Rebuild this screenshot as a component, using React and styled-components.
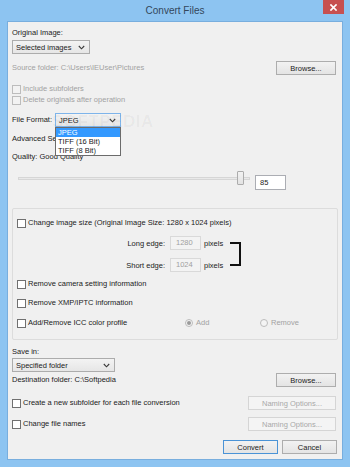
import React from 'react';
import styled, { createGlobalStyle } from 'styled-components';

const GlobalStyle = createGlobalStyle`
  html, body {
    margin: 0;
    padding: 0;
    background: #8dc4f1;
  }
  body {
    font-family: "Liberation Sans", Arial, sans-serif;
    font-size: 7.5px;
    color: #1b1b1b;
  }
  * {
    box-sizing: border-box;
  }
`;

const Chevron = () => (
  <svg width="7" height="5" viewBox="0 0 7 5">
    <polyline points="0.8,1 3.5,3.8 6.2,1" fill="none" stroke="#3a3a3a" strokeWidth="1.1" />
  </svg>
);

const CloseIcon = () => (
  <svg width="7" height="7" viewBox="0 0 7 7">
    <path d="M1 1 L6 6 M6 1 L1 6" stroke="#fff" strokeWidth="1.7" strokeLinecap="square" />
  </svg>
);

const App = () => {
  return (
    <>
      <GlobalStyle />
      <Window>
        <TitleBar>
          <span />
          <Title>Convert Files</Title>
          <CloseButton>
            <CloseIcon />
          </CloseButton>
        </TitleBar>

        <Client>
          <Watermark>SOFTPEDIA</Watermark>

          <Label $mt={6}>Original Image:</Label>
          <Select $w={78} $mt={2}>
            <span>Selected images</span>
            <Chevron />
          </Select>

          <SplitRow $mt={7}>
            <Label $disabled>{'Source folder: C:\\Users\\IEUser\\Pictures'}</Label>
            <Button $w={60}>Browse...</Button>
          </SplitRow>

          <CheckRow $mt={9}>
            <Box $disabled />
            <Label $disabled>Include subfolders</Label>
          </CheckRow>
          <CheckRow $mt={1}>
            <Box $disabled />
            <Label $disabled>Delete originals after operation</Label>
          </CheckRow>

          <FormatRow $mt={8}>
            <Label $w={43}>File Format:</Label>
            <FormatWrap>
              <Select $w={66} $focused>
                <span>JPEG</span>
                <Chevron />
              </Select>
              <Popup>
                <PopupItem $active>JPEG</PopupItem>
                <PopupItem>TIFF (16 Bit)</PopupItem>
                <PopupItem>TIFF (8 Bit)</PopupItem>
              </Popup>
            </FormatWrap>
          </FormatRow>

          <Label $mt={7}>Advanced Settings</Label>
          <Label $mt={8}>Quality: Good Quality</Label>

          <SliderRow $mt={9}>
            <Slider>
              <Track />
              <Thumb $left={219} />
            </Slider>
            <TextBox>85</TextBox>
          </SliderRow>

          <Group $mt={18}>
            <CheckRow $mt={9}>
              <Box />
              <Label>Change image size (Original Image Size: 1280 x 1024 pixels)</Label>
            </CheckRow>

            <EdgeBlock>
              <EdgeRows>
                <EdgeRow>
                  <EdgeLabel>Long edge:</EdgeLabel>
                  <EdgeInput>1280</EdgeInput>
                  <Unit>pixels</Unit>
                </EdgeRow>
                <EdgeRow $mt={8}>
                  <EdgeLabel>Short edge:</EdgeLabel>
                  <EdgeInput>1024</EdgeInput>
                  <Unit>pixels</Unit>
                </EdgeRow>
              </EdgeRows>
              <Bracket />
            </EdgeBlock>

            <CheckRow $mt={7}>
              <Box />
              <Label>Remove camera setting information</Label>
            </CheckRow>
            <CheckRow $mt={9}>
              <Box />
              <Label>Remove XMP/IPTC information</Label>
            </CheckRow>
            <CheckRow $mt={10}>
              <Box />
              <Label $w={157}>Add/Remove ICC color profile</Label>
              <RadioOption $w={75}>
                <Radio $checked />
                <Label $disabled>Add</Label>
              </RadioOption>
              <RadioOption>
                <Radio />
                <Label $disabled>Remove</Label>
              </RadioOption>
            </CheckRow>
          </Group>

          <Label $mt={7}>Save in:</Label>
          <Select $w={103} $mt={1}>
            <span>Specified folder</span>
            <Chevron />
          </Select>

          <SplitRow $mt={1}>
            <Label>{'Destination folder: C:\\Softpedia'}</Label>
            <Button $w={60}>Browse...</Button>
          </SplitRow>

          <SplitRow $mt={9}>
            <CheckRow>
              <Box />
              <Label>Create a new subfolder for each file conversion</Label>
            </CheckRow>
            <Button $w={88} $disabled>Naming Options...</Button>
          </SplitRow>

          <SplitRow $mt={7}>
            <CheckRow>
              <Box />
              <Label>Change file names</Label>
            </CheckRow>
            <Button $w={88} $disabled>Naming Options...</Button>
          </SplitRow>

          <Footer>
            <Button $w={55} $primary>Convert</Button>
            <Button $w={55}>Cancel</Button>
          </Footer>
        </Client>
      </Window>
    </>
  );
};

const Window = styled.div`
  width: 350px;
  height: 467px;
  display: flex;
  flex-direction: column;
  background: #8dc4f1;
`;

const TitleBar = styled.div`
  height: 21px;
  display: grid;
  grid-template-columns: 1fr auto 1fr;
  align-items: start;
`;

const Title = styled.div`
  line-height: 22px;
  font-size: 10px;
  color: #33475b;
`;

const CloseButton = styled.div`
  justify-self: end;
  margin-right: 6px;
  width: 21px;
  height: 14px;
  background: #c75050;
  display: flex;
  align-items: center;
  justify-content: center;
`;

const Client = styled.div`
  position: relative;
  flex: 1;
  margin: 0 7px 7px;
  padding: 0 6px 0 4px;
  border: 1px solid #78aede;
  background: #f0f0f0;
  display: flex;
  flex-direction: column;
  align-items: stretch;
`;

const Watermark = styled.div`
  position: absolute;
  left: 44px;
  top: 90px;
  font-size: 17px;
  font-weight: bold;
  letter-spacing: 0.5px;
  color: rgba(0, 0, 0, 0.04);
  z-index: 3;
  pointer-events: none;
`;

const Label = styled.div`
  flex: none;
  height: 10px;
  line-height: 10px;
  white-space: nowrap;
  margin-top: ${p => p.$mt || 0}px;
  width: ${p => (p.$w ? `${p.$w}px` : 'auto')};
  color: ${p => (p.$disabled ? '#a2a2a2' : '#1b1b1b')};
`;

const Select = styled.div`
  display: flex;
  align-items: center;
  justify-content: space-between;
  width: ${p => p.$w}px;
  height: 14px;
  margin-top: ${p => p.$mt || 0}px;
  padding: 0 4px 0 3px;
  border: 1px solid ${p => (p.$focused ? '#7eb4ea' : '#acacac')};
  background: linear-gradient(#f3f3f3, #e6e6e6);
  white-space: nowrap;
`;

const Button = styled.div`
  flex: none;
  width: ${p => p.$w}px;
  height: 14px;
  display: flex;
  align-items: center;
  justify-content: center;
  border: 1px solid ${p => (p.$primary ? '#4a93d6' : p.$disabled ? '#d5d5d5' : '#adadad')};
  background: ${p => (p.$disabled ? '#f4f4f4' : 'linear-gradient(#f2f2f2, #e4e4e4)')};
  color: ${p => (p.$disabled ? '#a8a8a8' : '#1b1b1b')};
  white-space: nowrap;
`;

const SplitRow = styled.div`
  display: flex;
  align-items: center;
  justify-content: space-between;
  height: 14px;
  margin-top: ${p => p.$mt || 0}px;
`;

const CheckRow = styled.div`
  display: flex;
  align-items: center;
  height: 10px;
  margin-top: ${p => p.$mt || 0}px;
`;

const Box = styled.div`
  flex: none;
  width: 9px;
  height: 9px;
  margin-right: 2px;
  border: 1px solid ${p => (p.$disabled ? '#bcbcbc' : '#707070')};
  background: ${p => (p.$disabled ? '#f2f2f2' : '#fff')};
`;

const FormatRow = styled.div`
  display: flex;
  align-items: center;
  height: 14px;
  margin-top: ${p => p.$mt || 0}px;
`;

const FormatWrap = styled.div`
  position: relative;
`;

const Popup = styled.div`
  position: absolute;
  top: 14px;
  left: 0;
  width: 66px;
  padding: 0;
  border: 1px solid #6b6b6b;
  background: #fff;
  z-index: 2;
`;

const PopupItem = styled.div`
  height: 9px;
  line-height: 9px;
  padding-left: 2px;
  background: ${p => (p.$active ? '#3399ff' : '#fff')};
  color: ${p => (p.$active ? '#fff' : '#1b1b1b')};
  white-space: nowrap;
`;

const SliderRow = styled.div`
  display: flex;
  align-items: flex-start;
  height: 19px;
  margin-top: ${p => p.$mt || 0}px;
`;

const Slider = styled.div`
  position: relative;
  width: 232px;
  height: 14px;
  margin-left: 6px;
  display: flex;
  align-items: center;
`;

const Track = styled.div`
  width: 100%;
  height: 3px;
  border: 1px solid #d6d6d6;
  background: #e9e9e9;
`;

const Thumb = styled.div`
  position: absolute;
  top: 0;
  left: ${p => p.$left}px;
  width: 7px;
  height: 14px;
  border: 1px solid #acacac;
  border-radius: 1px;
  background: linear-gradient(#f2f2f2, #e3e3e3);
`;

const TextBox = styled.div`
  width: 31px;
  height: 15px;
  margin: 4px 0 0 5px;
  padding-left: 4px;
  border: 1px solid #abadb3;
  background: #fff;
  line-height: 13px;
`;

const Group = styled.div`
  height: 132px;
  margin: ${p => p.$mt || 0}px -2px 0 0;
  padding-left: 4px;
  border: 1px solid #dcdcdc;
  border-radius: 2px;
  display: flex;
  flex-direction: column;
`;

const EdgeBlock = styled.div`
  display: flex;
  align-items: flex-start;
  margin-top: 8px;
`;

const EdgeRows = styled.div`
  display: flex;
  flex-direction: column;
`;

const EdgeRow = styled.div`
  display: flex;
  align-items: center;
  height: 14px;
  margin-top: ${p => p.$mt || 0}px;
`;

const EdgeLabel = styled.div`
  width: 148px;
  text-align: right;
  white-space: nowrap;
`;

const EdgeInput = styled.div`
  width: 31px;
  height: 14px;
  margin-left: 5px;
  padding-left: 5px;
  border: 1px solid #d9d9d9;
  background: #f3f3f3;
  color: #a0a0a0;
  line-height: 12px;
`;

const Unit = styled.div`
  width: 20px;
  margin-left: 3px;
`;

const Bracket = styled.div`
  width: 11px;
  height: 24px;
  margin: 6px 0 0 6px;
  border: 2px solid #111;
  border-left: none;
`;

const RadioOption = styled.div`
  display: flex;
  align-items: center;
  width: ${p => (p.$w ? `${p.$w}px` : 'auto')};
`;

const Radio = styled.div`
  width: 8px;
  height: 8px;
  margin-right: 3px;
  border-radius: 50%;
  border: 1px solid #bcbcbc;
  background: #f4f4f4;
  display: flex;
  align-items: center;
  justify-content: center;

  &::after {
    content: '';
    display: ${p => (p.$checked ? 'block' : 'none')};
    width: 4px;
    height: 4px;
    border-radius: 50%;
    background: #9a9a9a;
  }
`;

const Footer = styled.div`
  display: flex;
  justify-content: flex-end;
  gap: 4px;
  height: 14px;
  margin: 9px -1px 0 0;
`;

export default App;
